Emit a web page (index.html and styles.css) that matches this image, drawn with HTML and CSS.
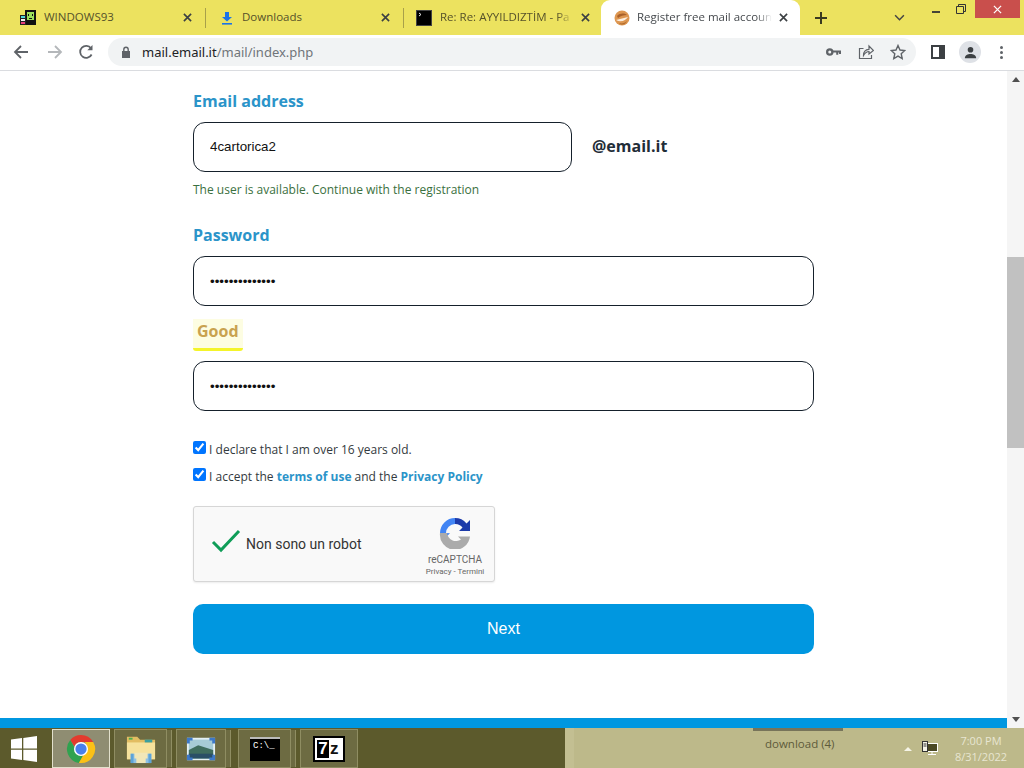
FILE: index.html
```html
<!DOCTYPE html>
<html lang="en">
<head>
<meta charset="utf-8">
<title>Register free mail account</title>
<link rel="stylesheet" href="styles.css">
</head>
<body>
<div class="tabbar">
  <div class="tab tab-first">
    <svg class="fav" viewBox="0 0 16 16"><rect x="5" y="0" width="11" height="15" fill="#111"/><rect x="7" y="2" width="7" height="8" fill="#9be05a"/><rect x="8" y="4" width="1" height="2" fill="#111"/><rect x="12" y="4" width="1" height="2" fill="#111"/><rect x="9" y="8" width="3" height="1" fill="#111"/><rect x="0" y="5" width="6" height="10" fill="#222"/><rect x="1" y="6" width="4" height="2" fill="#4fd6d6"/><rect x="1" y="9" width="4" height="2" fill="#f2f2f2"/><rect x="1" y="12" width="4" height="2" fill="#e8407a"/></svg>
    <span class="tab-title">WINDOWS93</span>
    <svg class="tab-x" viewBox="0 0 10 10"><path d="M1 1l8 8M9 1l-8 8"/></svg>
  </div>
  <div class="tab-sep"></div>
  <div class="tab">
    <svg class="fav" viewBox="0 0 16 16"><path d="M6 2h4v5h3l-5 4.500L3 7h3z" fill="#1a73e8"/><rect x="3" y="13" width="10" height="1.600" fill="#1a73e8"/></svg>
    <span class="tab-title">Downloads</span>
    <svg class="tab-x" viewBox="0 0 10 10"><path d="M1 1l8 8M9 1l-8 8"/></svg>
  </div>
  <div class="tab-sep"></div>
  <div class="tab tab-third">
    <svg class="fav" viewBox="0 0 16 16"><rect x=".5" y=".5" width="15" height="15" fill="#000" stroke="#444"/><path d="M3 3l2 1.500-2 1.500" fill="none" stroke="#fff" stroke-width=".9"/></svg>
    <span class="tab-title tab-fade">Re: Re: AYYILDIZTİM - Pa</span>
    <svg class="tab-x" viewBox="0 0 10 10"><path d="M1 1l8 8M9 1l-8 8"/></svg>
  </div>
  <div class="tab tab-active">
    <svg class="fav" viewBox="0 0 16 16"><circle cx="8" cy="8" r="7.500" fill="#dd9650"/><path d="M3 6c3-3 7-3 10-1-3 0-7 1-9 3z" fill="#a9602a"/><path d="M2 10c4-1 8-2 12-3-2 3-7 6-12 3z" fill="#fbeee0"/><path d="M5 13c3 1 6 0 8-2-1 3-5 5-8 2z" fill="#b06a2c"/></svg>
    <span class="tab-title tab-fade">Register free mail account</span>
    <svg class="tab-x" viewBox="0 0 10 10"><path d="M1 1l8 8M9 1l-8 8"/></svg>
  </div>
  <svg class="new-tab" viewBox="0 0 12 12"><path d="M6 0v12M0 6h12"/></svg>
  <svg class="tab-menu" viewBox="0 0 12 8"><path d="M1 1.500l5 5 5-5"/></svg>
  <div class="win-controls">
    <svg class="win-min" viewBox="0 0 10 10"><path d="M1 5h8"/></svg>
    <svg class="win-restore" viewBox="0 0 10 10"><path d="M.5 2.500h7v7h-7zM2.500 2.500v-2h7v7h-2"/></svg>
    <div class="win-close"><svg viewBox="0 0 10 10"><path d="M1 1l8 8M9 1l-8 8"/></svg></div>
  </div>
</div>

<div class="toolbar">
  <svg class="nav-ic" viewBox="0 0 16 16"><path d="M15 8H2M8 2L2 8l6 6"/></svg>
  <svg class="nav-ic nav-off" viewBox="0 0 16 16"><path d="M1 8h13M8 2l6 6-6 6"/></svg>
  <svg class="nav-ic nav-reload" viewBox="0 0 16 16"><path d="M13.600 10.500A6 6 0 1 1 13 4.300"/><path class="solid" d="M14.500 1v5.200H9.300z"/></svg>
  <div class="omnibox">
    <svg class="lock" viewBox="0 0 10 12"><path class="solid" d="M1 5h8v7H1z"/><path d="M2.800 5V3.400a2.200 2.200 0 0 1 4.400 0V5"/></svg>
    <span class="url"><b>mail.email.it</b>/mail/index.php</span>
    <span class="omni-space"></span>
    <svg class="omni-ic key" viewBox="0 0 16 10"><circle cx="4" cy="5" r="2.800"/><path class="thick" d="M7 4.500h9M12 4.500v3.500M15 4.500v2.500"/></svg>
    <svg class="omni-ic share" viewBox="0 0 16 16"><path d="M5.500 4.500h-4v10h12V11M5.500 11.500c0-4 2.500-6 5.500-6.200V2l4.500 4.500L11 10V7.500c-2.500 0-4 1.500-5.500 4z"/></svg>
    <svg class="omni-ic star" viewBox="0 0 16 16"><path d="M8 1.500l2 4.500 4.800.5-3.600 3.200 1 4.800L8 12.100 3.800 14.500l1-4.800L1.200 6.500 6 6z"/></svg>
  </div>
  <svg class="side-ic" viewBox="0 0 14 14"><rect x="1" y="1" width="12" height="12" fill="#fff" stroke="#3c4043" stroke-width="2"/><rect x="8" y="1" width="5" height="12" fill="#3c4043"/></svg>
  <div class="avatar"><svg viewBox="0 0 16 16"><circle cx="8" cy="5" r="3" fill="#3c4043"/><path d="M2 14c0-3.500 3-4.500 6-4.500s6 1 6 4.500z" fill="#3c4043"/></svg></div>
  <div class="dots"><i></i><i></i><i></i></div>
</div>

<div class="viewport">
  <div class="page">
    <form class="form">
      <label class="field-label">Email address</label>
      <div class="email-row">
        <input class="text-input email-input" type="text" value="4cartorica2" readonly>
        <span class="domain">@email.it</span>
      </div>
      <p class="note">The user is available. Continue with the registration</p>
      <label class="field-label label-password">Password</label>
      <input class="text-input" type="password" value="abcdefghijklmn" readonly>
      <div class="strength"><span>Good</span></div>
      <input class="text-input" type="password" value="abcdefghijklmn" readonly>
      <label class="check check-first"><input type="checkbox" checked> I declare that I am over 16 years old.</label>
      <label class="check"><input type="checkbox" checked> I accept the <a>terms of use</a> and the <a>Privacy Policy</a></label>
      <div class="captcha">
        <svg class="captcha-tick" viewBox="0 0 30 24"><path d="M2 13l8 8L28 2"/></svg>
        <span class="captcha-text">Non sono un robot</span>
        <div class="captcha-brand">
          <svg class="captcha-logo" viewBox="0 0 32 32">
            <path d="M16 1a15 15 0 0 1 11.500 5.400L31 3v11H20l3.500-3.500A9 9 0 0 0 16 7l-3-3z" fill="#1c3aa9"/>
            <path d="M1 16A15 15 0 0 1 16 1v6a9 9 0 0 0-9 9l4 .2L7 20 1 16z" fill="#4285f4"/>
            <path d="M1 16h7l-.6-2 .6 2a9 9 0 0 0 14 6.500l-3-3H31A15 15 0 0 1 1 16z" fill="#ababab"/>
          </svg>
          <span class="captcha-name">reCAPTCHA</span>
          <span class="captcha-links">Privacy - Termini</span>
        </div>
      </div>
      <button class="next" type="button">Next</button>
    </form>
    <div class="page-footer"></div>
  </div>
  <div class="scrollbar">
    <span class="sb-arrow sb-up"></span>
    <div class="sb-track"><div class="sb-thumb"></div></div>
    <span class="sb-arrow sb-down"></span>
  </div>
</div>

<div class="taskbar">
  <div class="task-left">
    <svg class="start" viewBox="0 0 26 26"><path d="M0 3.600l11-1.500v10.400H0zM12.300 1.900L26 0v12.500H12.300zM0 13.700h11v10.200L0 22.400zM12.300 13.700H26V26l-13.700-1.900z"/></svg>
    <div class="task-btn task-active">
      <svg class="task-ic" viewBox="0 0 32 32">
        <path d="M16 1a15 15 0 0 1 13 7.500H16a7.500 7.500 0 0 0-7 4.700L4.500 6.400A15 15 0 0 1 16 1z" fill="#e33b2e"/>
        <path d="M4.500 6.400L11 17.500a7.500 7.500 0 0 0 7 6L13.700 30.800A15 15 0 0 1 4.500 6.400z" fill="#30a24f"/>
        <path d="M29 8.500A15 15 0 0 1 13.700 30.800L20.500 19a7.500 7.500 0 0 0-.6-10.500z" fill="#fbc116"/>
        <circle cx="16" cy="16" r="7.500" fill="#fff"/><circle cx="16" cy="16" r="6" fill="#4a80ec"/>
      </svg>
    </div>
    <div class="task-btn task-w53 task-stack">
      <svg class="task-ic" viewBox="0 0 32 32"><path d="M1 3h11l3 3h16v21H1z" fill="#e2bd62"/><path d="M1 9h30v18H1z" fill="#f6e29c"/><rect x="3" y="4" width="4" height="2" fill="#4caf50"/><rect x="20" y="6" width="8" height="3" fill="#3aa0a0"/><path d="M5 21h22v10H5z" fill="#8fc1e4"/><path d="M9 20h14v6H9zM11 26v5h10v-5z" fill="#f1e7b8"/><path d="M5 21h3v10H5zM24 21h3v10h-3z" fill="#5ea4d8"/></svg>
    </div>
    <div class="task-btn task-w50 task-stack task-stack-wide">
      <svg class="task-ic" viewBox="0 0 32 32"><rect x="1" y="4" width="30" height="24" fill="#e4f0f4"/><rect x="3" y="6" width="26" height="20" fill="#a6cbd6"/><path d="M3 17l10-5 16 5v9H3z" fill="#3f6d5e"/><path d="M3 21h26v5H3z" fill="#2a4f66"/><path d="M1 4h6v3H4v3H1zM25 4h6v6h-3V7h-3zM1 22h3v3h3v3H1zM28 22h3v6h-6v-3h3z" fill="#3d78c8"/></svg>
    </div>
    <div class="task-btn task-w53 task-stack">
      <svg class="task-ic cmd-ic" viewBox="0 0 30 24"><rect width="30" height="24" fill="#000"/><rect width="30" height="2" fill="#bbb"/><text class="cmd-text" x="3" y="11">C:\_</text></svg>
    </div>
    <div class="task-btn task-w58">
      <div class="seven"><span class="seven-7">7</span><span class="seven-z">z</span></div>
    </div>
  </div>
  <div class="task-right">
    <span class="thumb-tab"></span>
    <span class="download-label">download (4)</span>
    <span class="tray-arrow"></span>
    <svg class="tray-net" viewBox="0 0 16 16"><rect x="4.500" y="2.500" width="11" height="8" fill="#4a4824" stroke="#fff"/><path d="M10 11v2M6 13.500h8" stroke="#fff" fill="none"/><rect x=".5" y=".5" width="5" height="10" fill="#f6f5e8" stroke="#333"/><path d="M1.500 3h3M1.500 5h3" stroke="#333"/></svg>
    <div class="clock"><span>7:00 PM</span><span>8/31/2022</span></div>
  </div>
</div>
</body>
</html>
```

FILE: styles.css
```css
* { box-sizing: border-box; }
html, body { margin: 0; height: 100%; }
body {
  width: 1024px; height: 768px; overflow: hidden;
  display: flex; flex-direction: column;
  font-family: "Open Sans", sans-serif; background: #fff;
}

/* Tab strip */
.tabbar { height: 35px; flex: none; display: flex; align-items: center; padding-left: 8px; background: #ece25f; color: #55512a; }
.tab { width: 197px; height: 35px; flex: none; display: flex; align-items: center; padding: 0 8px 0 13px; gap: 7px; font-size: 11.500px; }
.tab-first { padding-left: 12px; gap: 8px; }
.tab-third { width: 197px; padding-left: 12px; gap: 8px; padding-right: 6px; }
.tab-active { width: 199px; padding-left: 13px; padding-right: 7px; gap: 7px; background: #fff; border-radius: 9px 9px 0 0; color: #45494d; }
.tab-sep { width: 1px; height: 20px; background: #a8a04a; flex: none; }
.fav { width: 16px; height: 16px; flex: none; }
.tab-title { flex: 1; min-width: 0; line-height: 16px; margin-top: -2px; white-space: nowrap; overflow: hidden; }
.tab-fade { -webkit-mask-image: linear-gradient(to right, #000 88%, transparent 100%); mask-image: linear-gradient(to right, #000 88%, transparent 100%); }
.tab-x { width: 9px; height: 9px; flex: none; margin-right: 5px; fill: none; stroke: #3c4043; stroke-width: 1.800; }
.new-tab { width: 12px; height: 12px; margin-left: 15px; flex: none; fill: none; stroke: #3a3a20; stroke-width: 2; }
.tab-menu { width: 11px; height: 7px; margin-left: 67px; flex: none; fill: none; stroke: #444; stroke-width: 1.700; }
.win-controls { flex: 1; align-self: flex-start; display: flex; align-items: flex-start; padding-left: 26px; }
.win-min { width: 10px; height: 10px; margin-top: 7px; fill: none; stroke: #333; stroke-width: 1.800; flex: none; }
.win-restore { width: 10px; height: 10px; margin: 4px 0 0 15px; fill: none; stroke: #333; flex: none; }
.win-close { width: 45px; height: 18px; margin-left: 9px; background: #c94f4c; display: flex; align-items: center; justify-content: center; flex: none; }
.win-close svg { width: 9px; height: 9px; fill: none; stroke: #fff; stroke-width: 1.400; }

/* Address toolbar */
.toolbar { height: 36px; flex: none; display: flex; align-items: center; padding: 0 0 1px 13px; border-bottom: 1px solid #dadce0; background: #fff; }
.solid { fill: #5f6368; stroke: none; }
.nav-ic { width: 16px; height: 16px; flex: none; margin-right: 18px; fill: none; stroke: #5f6368; stroke-width: 1.800; }
.nav-off { stroke: #b4b7ba; margin-right: 15px; }
.nav-reload { margin-right: 14px; }
.omnibox { width: 808px; height: 28px; flex: none; display: flex; align-items: center; padding: 0 10px 0 13px; background: #f1f3f4; border-radius: 14px; }
.lock { width: 10px; height: 12px; flex: none; fill: none; stroke: #5f6368; stroke-width: 1.400; margin-right: 11px; }
.url { font: 13px "Noto Sans", sans-serif; color: #70757a; white-space: nowrap; }
.url b { font-weight: 400; color: #202124; }
.omni-space { flex: 1; }
.omni-ic { flex: none; fill: none; stroke: #5f6368; stroke-width: 1.200; }
.key { width: 15px; height: 10px; margin-right: 17px; stroke-width: 2.400; }
.key .thick { stroke-width: 2.200; }
.share { width: 16px; height: 16px; margin-right: 16px; }
.star { width: 16px; height: 16px; margin-right: 0; stroke-width: 1.400; }
.side-ic { width: 14px; height: 14px; flex: none; margin-left: 15px; }
.avatar { width: 22px; height: 22px; flex: none; margin-left: 14px; border-radius: 50%; background: #dee1e6; display: flex; align-items: center; justify-content: center; }
.avatar svg { width: 15px; height: 15px; }
.dots { flex: none; margin-left: 19px; display: flex; flex-direction: column; gap: 2px; }
.dots i { display: block; width: 3px; height: 3px; border-radius: 50%; background: #5f6368; }

/* Page */
.viewport { flex: 1; min-height: 0; display: flex; }
.page { flex: 1; min-width: 0; display: flex; flex-direction: column; }
.form { flex: 1; width: 621px; margin-left: 193px; display: flex; flex-direction: column; align-items: stretch; padding-top: 18px; }
.field-label { font-size: 16px; line-height: 24px; font-weight: 700; color: #2b94c9; }
.email-row { display: flex; align-items: center; gap: 20px; margin-top: 9px; }
.text-input { width: 100%; height: 50px; flex: none; padding: 0 16px; border: 1px solid #15202b; border-radius: 12px; background: #fff; font: 13.333px "Liberation Sans", sans-serif; color: #111; outline: none; }
.email-input { width: 379px; padding-bottom: 2px; }
.domain { font-size: 16px; line-height: 22px; font-weight: 700; color: #1f2d38; margin-top: -2px; }
.note { margin: 8px 0 0; font-size: 12px; line-height: 20px; height: 18px; color: #3a7040; }
.label-password { margin-top: 25px; margin-bottom: 9px; }
.strength { height: 55px; display: flex; align-items: flex-start; padding-top: 13px; }
.strength span { width: 50px; height: 32px; padding: 0 0 0 4px; font-size: 16px; line-height: 24px; font-weight: 700; color: #c9a24f; background: #fdfde2; border-bottom: 3px solid #f4f42a; border-radius: 0 0 3px 3px; }
.check { display: block; font-size: 12px; line-height: 18px; color: #333a40; white-space: nowrap; margin-top: 9px; }
.check-first { margin-top: 30px; }
.check input { width: 13px; height: 13px; margin: 0; vertical-align: 0; }
.check a { font-weight: 700; color: #2b94c9; }
.captcha { width: 302px; height: 76px; margin-top: 20px; display: flex; align-items: center; padding: 0 7px 0 17px; background: #f9f9f9; border: 1px solid #d6d6d6; border-radius: 3px; box-shadow: 0 1px 2px rgba(0,0,0,.08); font-family: Roboto, sans-serif; }
.captcha-tick { width: 30px; height: 24px; flex: none; fill: none; stroke: #0f9d58; stroke-width: 3; margin-top: -7px; }
.captcha-text { flex: 1; margin-left: 5px; font-size: 14px; color: #333; }
.captcha-brand { flex: none; width: 64px; padding-top: 7px; display: flex; flex-direction: column; align-items: center; color: #666; }
.captcha-logo { width: 32px; height: 32px; margin-top: -1px; }
.captcha-name { font-size: 10px; line-height: 12px; margin-top: 5px; }
.captcha-links { font-size: 8px; line-height: 12px; white-space: nowrap; }
.next { width: 100%; height: 50px; margin-top: 22px; flex: none; border: 0; border-radius: 10px; background: #0097e0; color: #fff; font: 16px "Liberation Sans", sans-serif; }
.page-footer { height: 10px; flex: none; background: #0097e0; }

/* Scrollbar */
.scrollbar { width: 17px; flex: none; display: flex; flex-direction: column; align-items: center; background: #f5f5f5; }
.sb-arrow { height: 17px; width: 17px; flex: none; display: flex; align-items: center; justify-content: center; }
.sb-up::before { content: ""; border: 4px solid transparent; border-top: 0; border-bottom: 5px solid #505050; }
.sb-down::before { content: ""; border: 4px solid transparent; border-bottom: 0; border-top: 5px solid #505050; }
.sb-track { flex: 1; width: 100%; padding-top: 169px; }
.sb-thumb { height: 191px; background: #c1c1c1; }

/* Windows taskbar */
.taskbar { height: 40px; flex: none; display: flex; background: #5c5a2c; }
.task-left { width: 565px; flex: none; display: flex; align-items: stretch; padding: 1px 0 0 11px; }
.start { width: 26px; height: 26px; flex: none; align-self: center; fill: #fff; margin-right: 15px; }
.task-btn { height: 39px; flex: none; display: flex; align-items: center; justify-content: center; border: 1px solid #8f8d62; background: #6d6b42; }
.task-active { width: 58px; margin-right: 4px; background: #8f8d72; border-color: #e2e0cc; }
.task-w53 { width: 53px; }
.task-w50 { width: 50px; }
.task-w58 { width: 58px; }
.task-stack { margin-right: 9px; box-shadow: 5px 0 0 -1px #6d6b42, 6px 0 0 -1px #8f8d62; }
.task-stack-wide { margin-right: 12px; }
.task-ic { width: 30px; height: 30px; flex: none; }
.cmd-ic { height: 24px; }
.cmd-text { font: 9px "Liberation Mono", monospace; fill: #fff; }
.seven { width: 32px; height: 26px; display: flex; align-items: center; gap: 1px; padding: 2px; background: #fff; border: 2px solid #000; font: 700 17px/18px "Liberation Sans", sans-serif; }
.seven-7 { width: 12px; height: 18px; background: #000; color: #fff; text-align: center; }
.seven-z { color: #111; }
.task-right { flex: 1; display: flex; align-items: flex-start; position: relative; background: linear-gradient(to right, #c3bf92 9px, #bdb98a 9px); color: #5d5b3a; font-size: 11.500px; }
.thumb-tab { position: absolute; left: 188px; top: 0; width: 90px; height: 3px; background: #77745a; }
.download-label { margin: 8px 0 0 200px; width: 139px; flex: none; }
.tray-arrow { width: 0; height: 0; flex: none; margin-top: 19px; border: 4px solid transparent; border-top: 0; border-bottom: 4px solid #f5f4e6; }
.tray-net { width: 16px; height: 16px; flex: none; margin: 13px 0 0 10px; }
.clock { margin-left: 10px; width: 66px; display: flex; flex-direction: column; align-items: center; padding-top: 5px; font-size: 11px; line-height: 16px; color: #e8e6d2; }
```
